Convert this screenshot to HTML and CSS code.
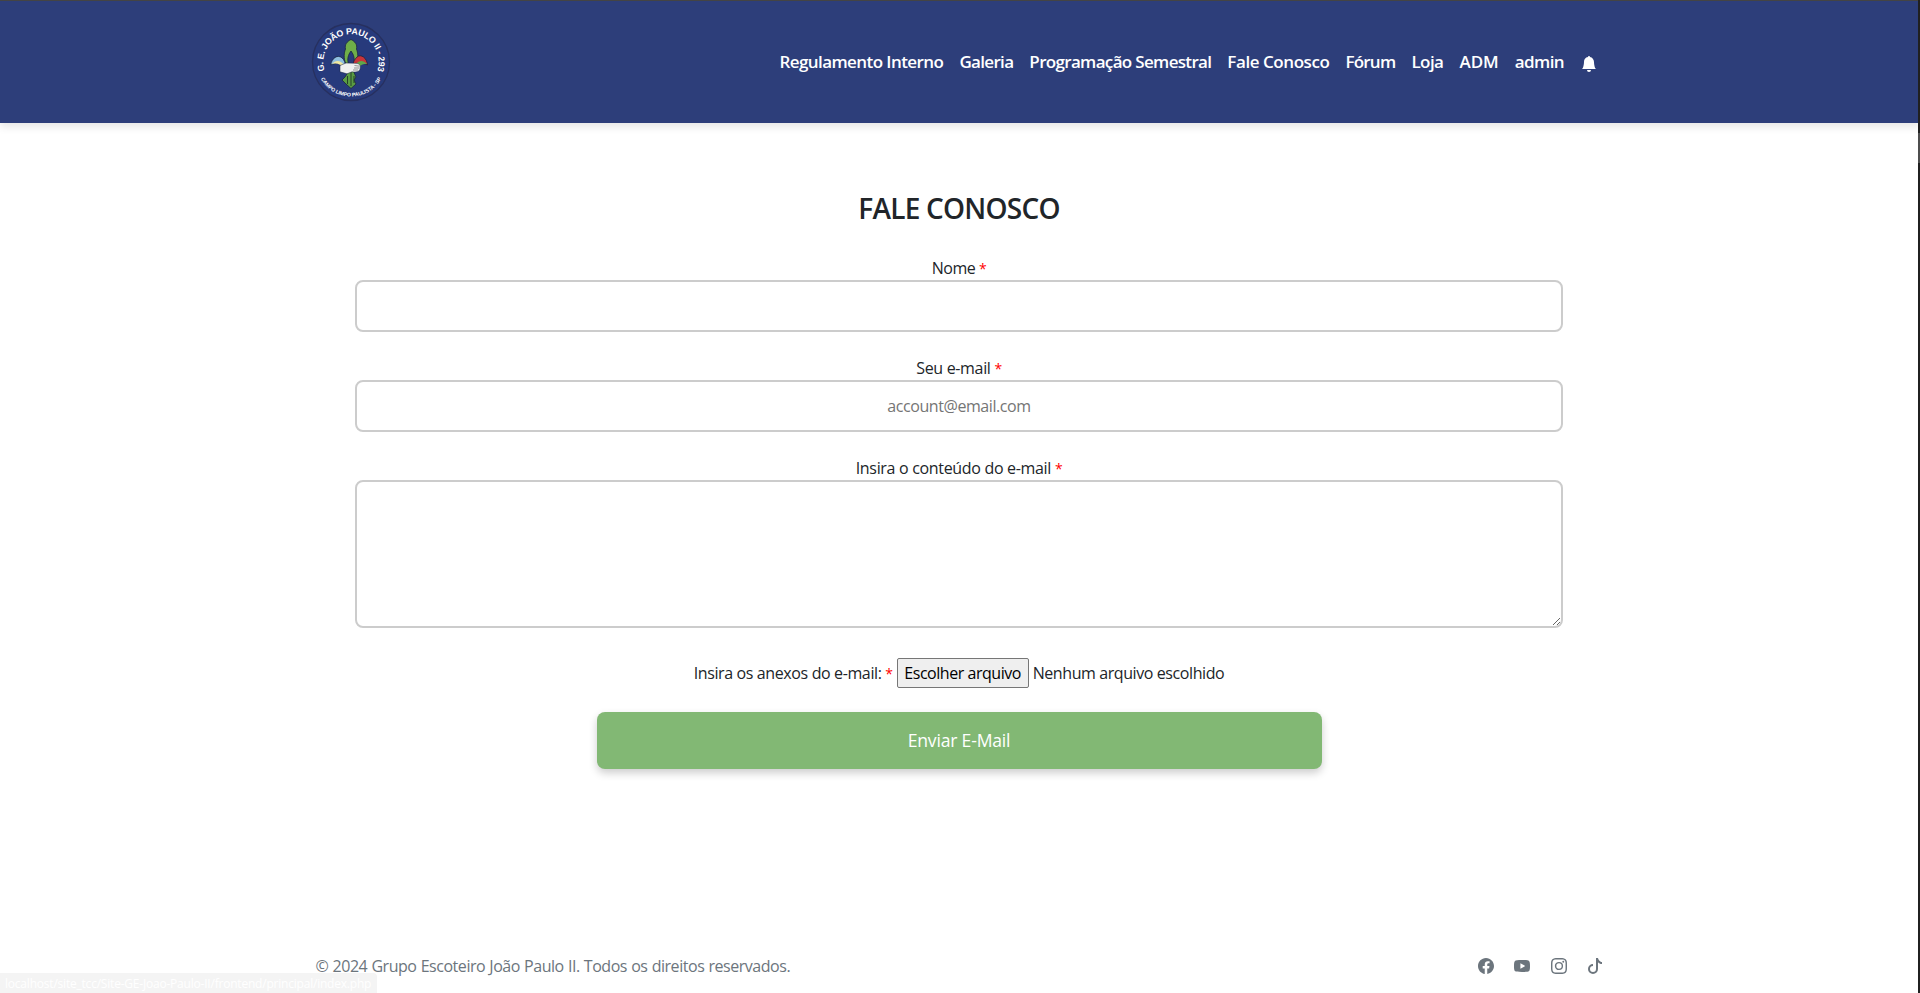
FILE: index.html
```html
<!DOCTYPE html>
<html lang="pt-BR">
<head>
<meta charset="utf-8">
<title>Fale Conosco</title>
<link rel="stylesheet" href="styles.css">
</head>
<body>
<header class="header">
  <div class="header-inner">
    <a class="brand" href="#">
      <svg class="logo" viewBox="0 0 80 80" width="80" height="80">
        <defs>
          <path id="arc-top" d="M16.400 54.500A27.700 27.700 0 1 1 63.600 54.500"/>
          <path id="arc-bottom" d="M6.440 48A34.500 34.500 0 0 0 73.560 48"/>
        </defs>
        <circle cx="40" cy="40" r="38.500" fill="#273a7c" stroke="#27305f" stroke-width="1.300"/>
        <text class="logo-top" text-anchor="middle"><textPath href="#arc-top" startOffset="50%">G. E. JOÃO PAULO II - 293</textPath></text>
        <text class="logo-bottom" text-anchor="middle"><textPath href="#arc-bottom" startOffset="50%">CAMPO LIMPO PAULISTA - SP</textPath></text>
        <path d="M40 17.500c-4 2-6.500 5-5.500 9.500-1.500 4-2 9 0 14l3 1c-1.500-5-.5-9 2.500-13 3 4 4 8 2.500 13l3-1c2-5 1.500-10 0-14 1-4.500-1.500-7.500-5.500-9.500z" fill="#6fae48" stroke="#1b2440" stroke-width=".8"/>
        <path d="M19.700 43c1-7 7-11 11.500-7 2 2 3.500 5 3 8.500-4-4-9-4-14.500-1.500z" fill="#8fbfe0" stroke="#1b2440" stroke-width=".8"/>
        <path d="M21 42c3.500-4.500 9-4 12.500 1.500l-1.500 2c-3-4-6.500-4.500-11-3.500z" fill="#efe7a0"/>
        <path d="M56.500 43c-.5-7-6.500-11.500-10.500-8-2.500 2.500-4 5-3.800 8 4.300-2 9-2.500 14.300 0z" fill="#c8343a" stroke="#1b2440" stroke-width=".8"/>
        <path d="M56 42c-3.500-4-8-4-11 0l3.500 3c1.500-2.500 4-3.500 7.500-3z" fill="#5fa64a"/>
        <path d="M38 49l-4 6-3 3 4 4 5 4.500 5-4.500-2-4 2-3-3-7z" fill="#5a9c42" stroke="#1b2440" stroke-width=".8"/>
        <path d="M40 50v14M36.500 54v8M43 54v7" stroke="#24402a" stroke-width="1" fill="none"/>
        <path d="M29 43.500l6-2.500 10 .3c4 0 5 3 4 6-1 3-5 3-8 2.500l-5 2-7-2z" fill="#f1f1f1" stroke="#1b2440" stroke-width=".5"/>
        <path d="M43.500 43.500l5 .7M43 46h5.500M42 48h5" stroke="#555" stroke-width=".6"/>
      </svg>
    </a>
    <nav class="nav">
      <a class="n1" href="#">Regulamento Interno</a>
      <a class="n2" href="#">Galeria</a>
      <a class="n3" href="#">Programação Semestral</a>
      <a class="n4" href="#">Fale Conosco</a>
      <a class="n5" href="#">Fórum</a>
      <a class="n6" href="#">Loja</a>
      <a class="n7" href="#">ADM</a>
      <a class="n8" href="#">admin</a>
      <a class="bell" href="#"><svg viewBox="0 0 16 16" width="16" height="16" fill="currentColor"><path d="M8 16a2 2 0 0 0 2-2H6a2 2 0 0 0 2 2m.995-14.901a1 1 0 1 0-1.990 0A5 5 0 0 0 3 6c0 1.098-.5 6-2 7h14c-1.500-1-2-5.902-2-7 0-2.420-1.720-4.440-4.005-4.901"/></svg></a>
    </nav>
  </div>
</header>
<main class="main">
  <h1 class="title">FALE CONOSCO</h1>
  <form class="form">
    <label class="label l1" for="nome">Nome <b>*</b></label>
    <input class="field" id="nome" type="text">
    <label class="label l2" for="email">Seu e-mail <b>*</b></label>
    <input class="field" id="email" type="text" placeholder="account@email.com">
    <label class="label l3" for="msg">Insira o conteúdo do e-mail <b>*</b></label>
    <textarea class="field area" id="msg"></textarea>
    <div class="file-row">
      <span>Insira os anexos do e-mail: <b>*</b></span>
      <button class="file-btn" type="button">Escolher arquivo</button>
      <span>Nenhum arquivo escolhido</span>
    </div>
    <button class="submit" type="button">Enviar E-Mail</button>
  </form>
</main>
<footer class="footer">
  <span class="copy">© 2024 Grupo Escoteiro João Paulo II. Todos os direitos reservados.</span>
  <div class="social">
    <svg viewBox="0 0 16 16"><path d="M16 8.049c0-4.446-3.582-8.050-8-8.050C3.580 0-.002 3.603-.002 8.050c0 4.017 2.926 7.347 6.750 7.951v-5.625h-2.030V8.050H6.750V6.275c0-2.017 1.195-3.131 3.022-3.131.876 0 1.791.157 1.791.157v1.980h-1.009c-.993 0-1.303.621-1.303 1.258v1.510h2.218l-.354 2.326H9.250V16c3.824-.604 6.750-3.934 6.750-7.951"/></svg>
    <svg viewBox="0 0 16 16"><path fill-rule="evenodd" d="M8 2C3.500 2 1.700 2.200 1 2.900.2 3.700 0 5 0 8s.2 4.300 1 5.100c.7.700 2.500.9 7 .9s6.300-.2 7-.9c.8-.8 1-2.100 1-5.100s-.2-4.300-1-5.100C14.300 2.200 12.500 2 8 2M6.400 5.209l4.157 2.396a.460.460 0 0 1 0 .79L6.400 10.791z"/></svg>
    <svg viewBox="0 0 16 16"><path d="M8 0C5.829 0 5.556.010 4.703.048 3.850.088 3.269.222 2.760.420a3.900 3.900 0 0 0-1.417.923A3.900 3.900 0 0 0 .420 2.760C.222 3.268.087 3.850.048 4.700.010 5.555 0 5.827 0 8.001c0 2.172.010 2.444.048 3.297.040.852.174 1.433.372 1.942.205.526.478.972.923 1.417.444.445.890.719 1.416.923.510.198 1.090.333 1.942.372C5.555 15.990 5.827 16 8 16s2.444-.010 3.298-.048c.851-.040 1.434-.174 1.943-.372a3.900 3.900 0 0 0 1.416-.923c.445-.445.718-.891.923-1.417.197-.509.332-1.090.372-1.942C15.990 10.445 16 10.173 16 8s-.010-2.445-.048-3.299c-.040-.851-.175-1.433-.372-1.941a3.900 3.900 0 0 0-.923-1.417A3.900 3.900 0 0 0 13.240.420c-.510-.198-1.092-.333-1.943-.372C10.443.010 10.172 0 7.998 0zm-.717 1.442h.718c2.136 0 2.389.007 3.232.046.780.035 1.204.166 1.486.275.373.145.640.319.920.599s.453.546.598.920c.110.281.240.705.275 1.485.039.843.047 1.096.047 3.231s-.008 2.389-.047 3.232c-.035.780-.166 1.203-.275 1.485a2.500 2.500 0 0 1-.599.919c-.280.280-.546.453-.920.598-.280.110-.704.240-1.485.276-.843.038-1.096.047-3.232.047s-2.390-.009-3.233-.047c-.780-.036-1.203-.166-1.485-.276a2.500 2.500 0 0 1-.920-.598 2.500 2.500 0 0 1-.600-.920c-.109-.281-.240-.705-.275-1.485-.038-.843-.046-1.096-.046-3.233s.008-2.388.046-3.231c.036-.780.166-1.204.276-1.486.145-.373.319-.640.599-.920s.546-.453.920-.598c.282-.110.705-.240 1.485-.276.738-.034 1.024-.044 2.515-.045zm4.988 1.328a.960.960 0 1 0 0 1.920.960.960 0 0 0 0-1.920m-4.270 1.122a4.109 4.109 0 1 0 0 8.217 4.109 4.109 0 0 0 0-8.217m0 1.441a2.667 2.667 0 1 1 0 5.334 2.667 2.667 0 0 1 0-5.334"/></svg>
    <svg viewBox="0 0 16 16"><path d="M9 0h1.980c.144.715.540 1.617 1.235 2.512C12.895 3.389 13.797 4 15 4v2c-1.753 0-3.070-.814-4-1.829V11a5 5 0 1 1-5-5v2a3 3 0 1 0 3 3z"/></svg>
  </div>
</footer>
<div class="status">localhost/site_tcc/Site-GE-Joao-Paulo-II/frontend/principal/index.php</div>
<div class="scrollbar"></div>
</body>
</html>
```
FILE: styles.css
```css
* { box-sizing: border-box; }
body {
  margin: 0;
  height: 993px;
  overflow: hidden;
  display: flex;
  flex-direction: column;
  background: #fff;
  color: #212529;
  font-family: "Open Sans", "Noto Sans", sans-serif;
  font-size: 16px;
  line-height: 24px;
}
a { color: inherit; text-decoration: none; }
b { color: #f00; font-size: 14px; font-weight: 400; line-height: 1; }
span { white-space: nowrap; }

.header {
  flex: none;
  height: 123px;
  border-top: 1px solid #444;
  background: #2d3e7a;
  box-shadow: 0 4px 8px rgba(0, 0, 0, .1);
}
.header-inner {
  width: 1286px;
  height: 121px;
  margin-left: 311px;
  display: flex;
  align-items: center;
  justify-content: space-between;
}
.brand { display: block; height: 80px; }
.logo { display: block; }
.logo-top, .logo-bottom { fill: #fff; font-family: "Liberation Sans", sans-serif; font-weight: 700; }
.logo-top { font-size: 8.800px; letter-spacing: -.24px; }
.logo-bottom { font-size: 5.200px; letter-spacing: -.08px; }
.nav {
  display: flex;
  align-items: center;
  gap: 16px;
  padding-top: 1px;
  color: #fff;
  font-size: 17px;
  font-weight: 600;
}
.nav a { white-space: nowrap; }
.n1 { letter-spacing: -.57px; }
.n2, .n3 { letter-spacing: -.67px; }
.n4 { letter-spacing: -.44px; }
.n5 { letter-spacing: -.76px; }
.n6 { letter-spacing: -.55px; }
.n8 { letter-spacing: -.6px; }
.bell svg { display: block; margin: 3px 0 0 1px; }

.main {
  width: 1208px;
  margin: 66px 0 0 355px;
  text-align: center;
}
.title {
  margin: 0;
  height: 67px;
  font-size: 28px;
  line-height: 38px;
  font-weight: 600;
  letter-spacing: -.75px;
}
.form { display: flex; flex-direction: column; align-items: center; }
.label { height: 24px; white-space: nowrap; }
.l1 { letter-spacing: -.45px; }
.l2 { letter-spacing: -.33px; }
.l3 { letter-spacing: -.32px; }
.field {
  width: 1208px;
  height: 52px;
  margin: 0 0 24px;
  padding: 12px;
  border: 2px solid #ccc;
  border-radius: 8px;
  background: #fff;
  outline: 0;
  font: inherit;
  letter-spacing: -.43px;
  text-align: center;
}
.field::placeholder { color: #757575; }
.area { height: 148px; margin-bottom: 30px; resize: vertical; }
.file-row { display: flex; align-items: center; height: 30px; gap: 4px; letter-spacing: -.41px; }
.file-row span:first-child { letter-spacing: -.38px; }
.file-btn {
  width: 132px;
  height: 30px;
  padding: 0;
  border: 1px solid #767676;
  border-radius: 2px;
  background: #efefef;
  color: #000;
  font: inherit;
  letter-spacing: -.46px;
}
.submit {
  width: 725px;
  height: 57px;
  margin-top: 24px;
  padding: 0 0 2px;
  border: 0;
  border-radius: 8px;
  background: #82b874;
  box-shadow: 0 4px 8px rgba(0, 0, 0, .2);
  color: #fff;
  font: inherit;
  font-size: 17.600px;
  letter-spacing: -.2px;
}

.footer {
  width: 1287.500px;
  margin: auto 0 15px 315.500px;
  display: flex;
  align-items: center;
  justify-content: space-between;
  color: #6c757d;
}
.copy { letter-spacing: -.46px; word-spacing: .45px; }
.social { display: flex; gap: 20.400px; }
.social svg { width: 16px; height: 16px; fill: currentColor; }

.status {
  position: absolute;
  left: 0;
  bottom: 0;
  width: 377px;
  height: 20px;
  padding-left: 5px;
  border-top-right-radius: 4px;
  background: #f4f4f4;
  color: #fff;
  font-size: 12px;
  line-height: 21px;
  letter-spacing: -.21px;
  white-space: nowrap;
}
.scrollbar {
  position: absolute;
  right: 0;
  top: 0;
  width: 2px;
  height: 993px;
  background: linear-gradient(#202020 133px, #4d4d4d 133px 163px, #202020 163px);
}
```
